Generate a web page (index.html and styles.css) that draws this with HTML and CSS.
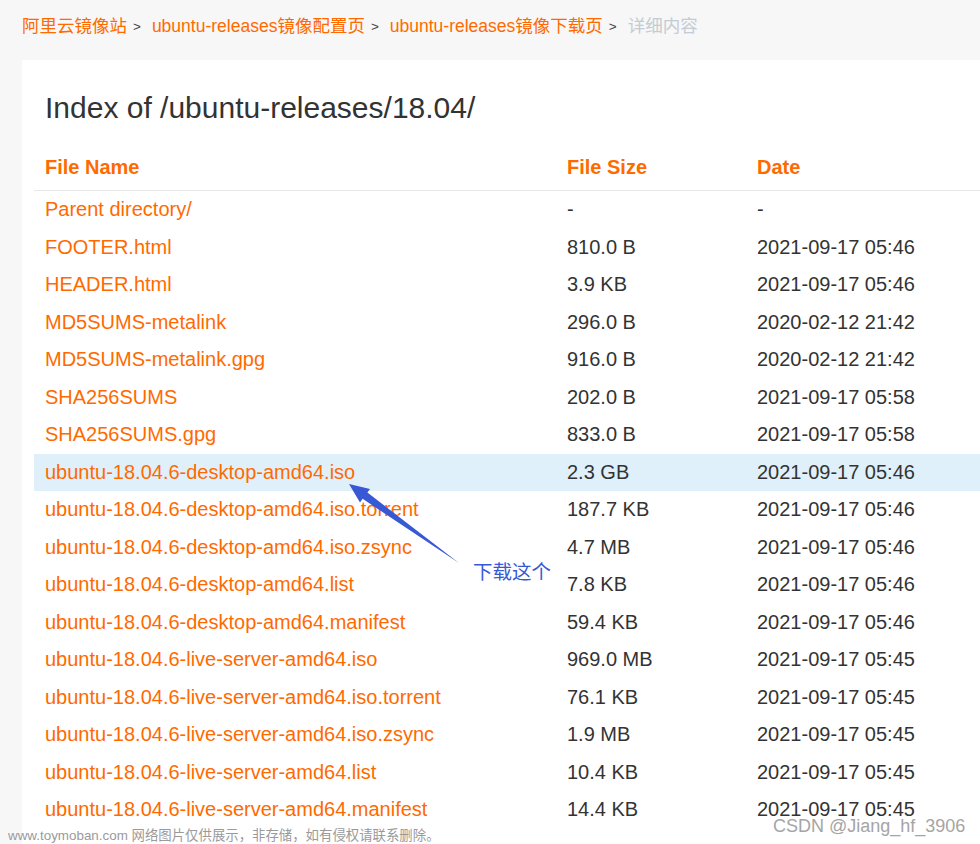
FILE: index.html
```html
<!DOCTYPE html>
<html lang="zh-CN">
<head>
<meta charset="utf-8">
<title>Index of /ubuntu-releases/18.04/</title>
<link rel="stylesheet" href="styles.css">
</head>
<body>
<nav class="crumbs">
  <a class="crumb" href="#">阿里云镜像站</a><span class="sep">&gt;</span>
  <a class="crumb" href="#">ubuntu-releases镜像配置页</a><span class="sep">&gt;</span>
  <a class="crumb" href="#">ubuntu-releases镜像下载页</a><span class="sep">&gt;</span>
  <span class="crumb current">详细内容</span>
</nav>
<main class="panel">
  <h1 class="title">Index of /ubuntu-releases/18.04/</h1>
  <table class="listing">
    <thead>
      <tr><th class="c-name">File Name</th><th class="c-size">File Size</th><th class="c-date">Date</th></tr>
    </thead>
    <tbody>
      <tr><td><a href="#">Parent directory/</a></td><td>-</td><td>-</td></tr>
      <tr><td><a href="#">FOOTER.html</a></td><td>810.0 B</td><td>2021-09-17 05:46</td></tr>
      <tr><td><a href="#">HEADER.html</a></td><td>3.9 KB</td><td>2021-09-17 05:46</td></tr>
      <tr><td><a href="#">MD5SUMS-metalink</a></td><td>296.0 B</td><td>2020-02-12 21:42</td></tr>
      <tr><td><a href="#">MD5SUMS-metalink.gpg</a></td><td>916.0 B</td><td>2020-02-12 21:42</td></tr>
      <tr><td><a href="#">SHA256SUMS</a></td><td>202.0 B</td><td>2021-09-17 05:58</td></tr>
      <tr><td><a href="#">SHA256SUMS.gpg</a></td><td>833.0 B</td><td>2021-09-17 05:58</td></tr>
      <tr class="hl"><td><a href="#">ubuntu-18.04.6-desktop-amd64.iso</a></td><td>2.3 GB</td><td>2021-09-17 05:46</td></tr>
      <tr><td><a href="#">ubuntu-18.04.6-desktop-amd64.iso.torrent</a></td><td>187.7 KB</td><td>2021-09-17 05:46</td></tr>
      <tr><td><a href="#">ubuntu-18.04.6-desktop-amd64.iso.zsync</a></td><td>4.7 MB</td><td>2021-09-17 05:46</td></tr>
      <tr><td><a href="#">ubuntu-18.04.6-desktop-amd64.list</a></td><td>7.8 KB</td><td>2021-09-17 05:46</td></tr>
      <tr><td><a href="#">ubuntu-18.04.6-desktop-amd64.manifest</a></td><td>59.4 KB</td><td>2021-09-17 05:46</td></tr>
      <tr><td><a href="#">ubuntu-18.04.6-live-server-amd64.iso</a></td><td>969.0 MB</td><td>2021-09-17 05:45</td></tr>
      <tr><td><a href="#">ubuntu-18.04.6-live-server-amd64.iso.torrent</a></td><td>76.1 KB</td><td>2021-09-17 05:45</td></tr>
      <tr><td><a href="#">ubuntu-18.04.6-live-server-amd64.iso.zsync</a></td><td>1.9 MB</td><td>2021-09-17 05:45</td></tr>
      <tr><td><a href="#">ubuntu-18.04.6-live-server-amd64.list</a></td><td>10.4 KB</td><td>2021-09-17 05:45</td></tr>
      <tr><td><a href="#">ubuntu-18.04.6-live-server-amd64.manifest</a></td><td>14.4 KB</td><td>2021-09-17 05:45</td></tr>
    </tbody>
  </table>
</main>
<svg class="arrow" width="980" height="844" viewBox="0 0 980 844" aria-hidden="true">
  <polygon points="349,484 370,489 367.4,492.6 459,563 362.6,498.8 360,502.5" fill="#3858d6"/>
</svg>
<div class="note">下载这个</div>
<div class="wm-left">www.toymoban.com 网络图片仅供展示，非存储，如有侵权请联系删除。</div>
<div class="wm-right">CSDN @Jiang_hf_3906</div>
</body>
</html>
```
FILE: styles.css
```css
html, body {
  margin: 0;
  padding: 0;
}
body {
  background: #f7f7f7;
  font-family: "Liberation Sans", "Noto Sans CJK SC", sans-serif;
  color: #333;
  width: 980px;
  height: 844px;
  overflow: hidden;
  position: relative;
}
a { text-decoration: none; color: #ff6a00; }

.crumbs {
  height: 60px;
  box-sizing: border-box;
  padding: 14px 0 0 22px;
  font-size: 17.5px;
  line-height: 25px;
  white-space: nowrap;
  display: flex;
  align-items: flex-start;
}
.crumb { color: #ff6a00; }
.crumb.current { color: #c3cbd4; }
.sep {
  font-size: 13.5px;
  color: #444;
  padding: 0 11px 0 6px;
  line-height: 25px;
}

.panel {
  background: #fff;
  margin-left: 22px;
  width: 1000px;
  padding: 30px 0 0 12px;
  box-sizing: border-box;
  min-height: 800px;
}
.title {
  margin: 0 0 0 11px;
  font-size: 30px;
  line-height: 36px;
  font-weight: normal;
  color: #333;
}
.listing {
  margin-top: 18px;
  width: 100%;
  border-collapse: collapse;
  font-size: 20px;
  line-height: 23px;
}
.listing th {
  text-align: left;
  color: #ff6a00;
  font-weight: bold;
  padding: 12px 11px 11px;
  border-bottom: 1px solid #e8e8e8;
}
.c-name { width: 500px; }
.c-size { width: 168px; }
.listing td {
  padding: 7.25px 11px;
  white-space: nowrap;
  color: #333;
}
.listing tr.hl td { background: #dff0fa; }

.arrow {
  position: absolute;
  left: 0;
  top: 0;
  pointer-events: none;
}
.note {
  position: absolute;
  left: 473px;
  top: 559px;
  font-size: 19.5px;
  line-height: 24px;
  color: #3858d6;
  font-family: "Noto Sans CJK SC", sans-serif;
}
.wm-left {
  position: absolute;
  left: 8px;
  top: 827px;
  font-size: 13.4px;
  line-height: 17px;
  color: #9a9a9a;
  white-space: nowrap;
}
.wm-right {
  position: absolute;
  left: 773px;
  top: 814px;
  font-size: 18px;
  line-height: 24px;
  color: #a5a5a5;
  white-space: nowrap;
  text-shadow: 0 0 2px #fff, 0 0 2px #fff;
}
```
